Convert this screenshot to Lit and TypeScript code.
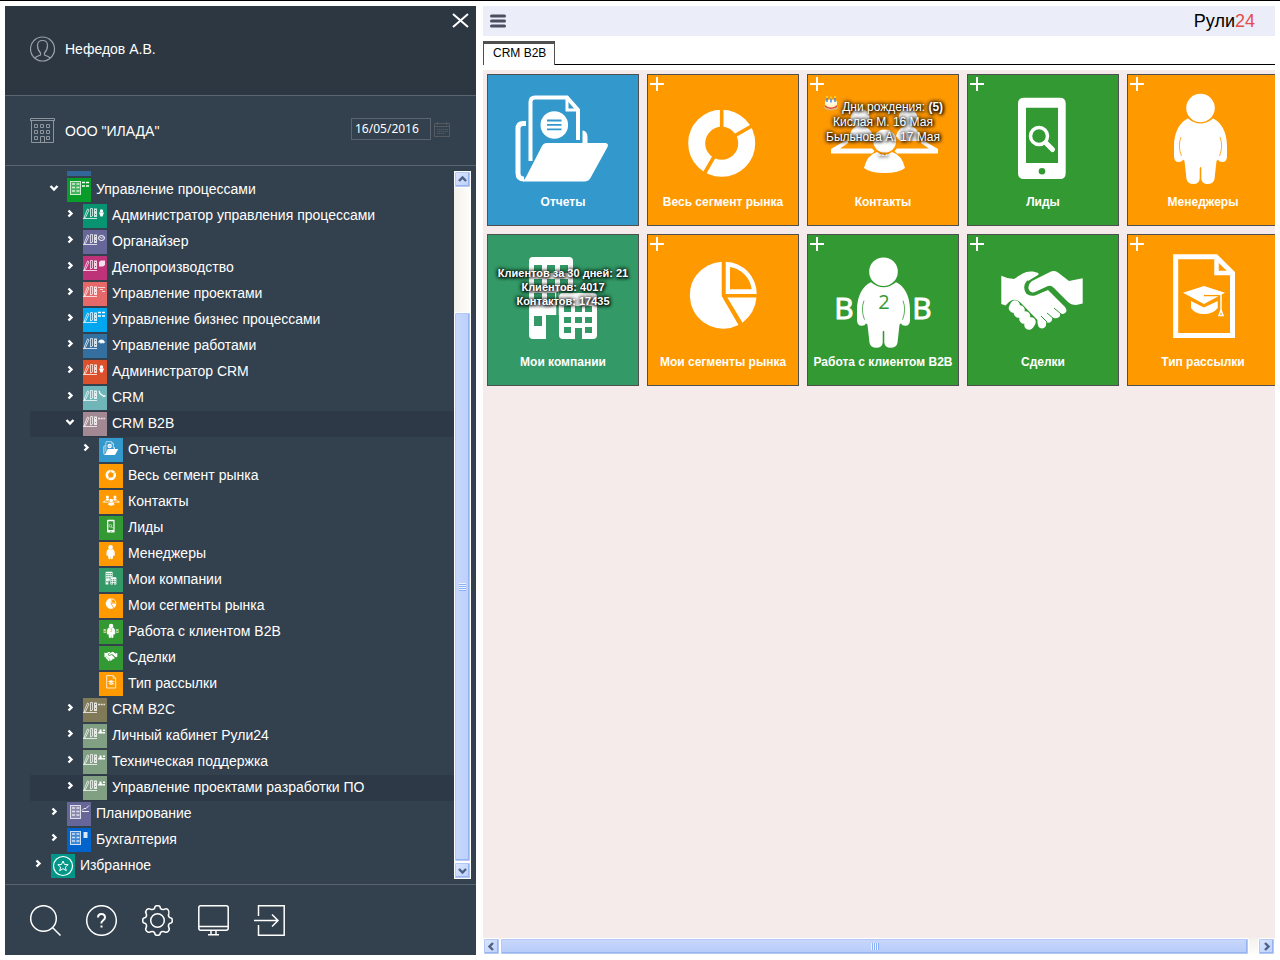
import { LitElement, html, css, svg, nothing, SVGTemplateResult } from "lit";
import { customElement, property } from "lit/decorators.js";
import { classMap } from "lit/directives/class-map.js";
import { styleMap } from "lit/directives/style-map.js";

type Art = SVGTemplateResult;

const personBody = svg`
  <circle cx="73.5" cy="34" r="14.3"/>
  <path d="M61 44.5Q67 49.5 73.5 49.5T86 44.5C94 48 100 58 100 72V83Q99.500 88 95.500 88Q92 88 91 85.500L89.500 87L87.500 105Q86.500 110 80.500 110Q75 110 74.300 105V94Q73.500 92 72.700 94V105Q72 110 66.500 110Q60.500 110 59.500 105L57.500 87L56 85.500Q55 88 51.500 88Q47.500 88 47 83V72C47 58 53 48 61 44.500Z"/>
  <path d="M54 63Q50.500 72 54.500 82M93 63Q96.500 72 92.500 82" fill="none" stroke="currentColor" stroke-width=".8"/>`;

// Pictures of the sections, drawn on the 152-unit square of a tile; currentColor is the tile's own colour.
const art: Record<string, Art> = {
  reports: svg`
    <path d="M43.500 87V28Q43.500 23.500 48 23.500H80L91 36V66" fill="none" stroke="#fff" stroke-width="4"/>
    <path d="M80 25V36H91" fill="none" stroke="#fff" stroke-width="3"/>
    <circle cx="67.300" cy="51" r="13.800"/>
    <path d="M60 46.500H74.500M60 50.900H74.500M60 55.300H74.500" stroke="currentColor" stroke-width="1.800"/>
    <path d="M39 49.500H36Q31 49.500 31 55V99Q31 105 37 105" fill="none" stroke="#fff" stroke-width="5"/>
    <path d="M95.500 56.500Q100.500 57 100.500 63V70H95.500Z"/>
    <path d="M39 103L55 72Q56.500 69 60 69H118.500Q122 69.500 120.500 73L104 103Q102 107.500 97 107.500H36Z"/>`,
  segment: svg`
    <circle cx="74.700" cy="69.300" r="25" fill="none" stroke="#fff" stroke-width="17"/>
    <path d="M74.700 69.300V33M74.700 69.300L106 51.200M74.700 69.300L56.500 101" stroke="currentColor" stroke-width="3.600"/>`,
  contacts: svg`
    <circle cx="53" cy="44" r="9.500"/><circle cx="101" cy="44" r="9.500"/>
    <path d="M42 66Q43 52 53 52Q63 52 66 62L62 67H42ZM113 66Q112 52 101 52Q92 52 89 62L93 67H113Z"/>
    <path d="M24 79.500V75L41 65V69L33 74.500H65L67.500 77L65 79.500ZM131 79.500V75L114 65V69L122 74.500H90L87.500 77L90 79.500Z"/>
    <path d="M57 94Q60 81 70 78Q77.500 84 85 78Q95 81 98 94Q92 99 77.500 99Q63 99 57 94Z"/>
    <circle cx="77.700" cy="67" r="11.500"/>`,
  leads: svg`
    <path fill-rule="evenodd" d="M57 23.700H93Q98.700 23.700 98.700 29.500V99Q98.700 105 93 105H57Q51 105 51 99V29.500Q51 23.700 57 23.700ZM59 33.700V89H91V33.700Z"/>
    <circle cx="75" cy="97.300" r="3.300" fill="currentColor"/>
    <circle cx="72" cy="62" r="8.500" fill="none" stroke="#fff" stroke-width="3.500"/>
    <path d="M79 69L85.500 75.500" stroke="#fff" stroke-width="5" stroke-linecap="round"/>`,
  managers: personBody,
  companies: svg`
    <path d="M46 23H82Q86 23 86 27V57H72V81H59V105H46Q42 105 42 101V27Q42 23 46 23Z"/>
    <path d="M76 59H106Q110 59 110 63V101Q110 105 106 105H95V94H88V105H76Q72 105 72 101V63Q72 59 76 59Z"/>
    <path fill="currentColor" d="M47 31h8v8h-8zM60 31h8v8h-8zM73 31h8v8h-8zM47 45h8v8h-8zM60 45h8v8h-8zM73 45h8v8h-8zM47 59h8v8h-8zM60 59h8v8h-8zM47 82h8v10h-8zM77 72h7v6h-7zM88 72h7v6h-7zM98 72h7v6h-7zM77 83h7v6h-7zM88 83h7v6h-7zM98 83h7v6h-7zM77 93h7v6h-7zM98 93h7v6h-7z"/>
    <path d="M70.500 58V81" stroke="currentColor" stroke-width="2.500"/>`,
  segments: svg`
    <path d="M74.700 27.700A33.500 33.500 0 1 0 91.500 91L74.700 62Z"/>
    <path fill-rule="evenodd" d="M78.700 27.700A32 32 0 0 1 109.700 60H78.700ZM83 33V55.300H104.700A26 26 0 0 0 83 33Z"/>
    <path d="M80.300 63.500H109.500Q108 79 95.500 88.700Z"/>`,
  b2b: svg`
    <g transform="translate(3 3.700)">${personBody}</g>
    <text x="37" y="85" class="letter">B</text><text x="115" y="85" class="letter">B</text>
    <text x="77" y="75" class="digit">2</text>`,
  deals: svg`
    <path d="M34.300 41.700Q41 45 47 45C54 41 58 36 68 38Q73 39 71 41L61 47Q56 53 60 59Q64 62 69 60.500L81 56L98 73Q101 77 98 79Q96 81 93 79Q94 83 90 84Q87 85 85 83Q86 87 83 88.500Q81 89 79 88Q80 94 75 94.500Q70 94 70.500 86L54 69Q48 63 42 68L38.500 71.500L34.300 70Z"/>
    <path d="M115.700 44.300L102 47L91 38.500Q87 36 83 38L65 47Q60 51 62 56Q64 60 69 57.500L81 52Q84 51 87 54L101 68Q104 71 109 71L115.700 69.500Z"/>
    <path d="M61 47Q56 53 60 59Q64 62 69 60L81 54.500Q83.500 54 86 56.500L99 69.500" fill="none" stroke="currentColor" stroke-width="2"/>
    <path d="M48 71L46.500 74M53 76L51.500 79M58.500 82L57 85M64 88L62 91" stroke="#fff" stroke-width="9.500" stroke-linecap="round"/>
    <path d="M87 74L94 80M80 79L87 85M74 82L80 88" stroke="currentColor" stroke-width="1"/>`,
  mailing: svg`
    <path d="M48.700 22.700H89L105.500 39V101.500H48.700Z" fill="none" stroke="#fff" stroke-width="5"/>
    <path d="M89.500 23V39H105" fill="none" stroke="#fff" stroke-width="4.500"/>
    <path d="M56 58.700L77 52L98 58.700L77 70ZM64 67L77 73.500L90.700 67V74Q86 80 77 80Q68 80 64 74Z"/>
    <path d="M77 61.500H92V80" fill="none" stroke="currentColor" stroke-width="1.500"/>
    <path d="M78 60H94V76L96 81.500H92L94 76" fill="none" stroke="#fff" stroke-width="1.500"/>`,
};

// Small mark in the corner of a module picture, on a 24-unit square.
const marks: Record<string, Art> = {
  flow: svg`<path d="M15 4.500h7M15 8h7" stroke="#fff" stroke-width="1.600" stroke-dasharray="3 1"/>`,
  person: svg`<circle cx="18.500" cy="7" r="1.700"/><path d="M16 8.500h5l-1.500 4h-2z"/>`,
  clock: svg`<ellipse cx="18.500" cy="8" rx="3" ry="2.500" fill="none" stroke="#fff"/><path d="M17 7l2 1.500 1.500-1.500" fill="none" stroke="#fff" stroke-width=".8"/>`,
  box: svg`<path d="M16 6l2-1.500h4V9l-2 1.500h-4z" opacity=".85"/>`,
  gantt: svg`<path d="M15 5.500h7M17 7.500h3M19 9.500h3" stroke="#fff" opacity=".7"/>`,
  people: svg`<path d="M15 8.500q1-3 3.500-3t3.500 3l-2 1-1-1-1 1.500-1-1.500z"/>`,
  phone: svg`<path d="M16 5l1 2.500 4 3 1.500-1" fill="none" stroke="#fff" stroke-width="1.200"/>`,
  dots: svg`<path d="M15 6.500h7" stroke="#fff" stroke-width="1.500" stroke-dasharray="2 .7" opacity=".8"/>`,
  card: svg`<path d="M15 9.500q0-2 1.500-2v-2h2v2q1.500 0 1.500 2zM20 5.500h2v1.500h-2zM20 8h2v1.500h-2z"/>`,
  chart: svg`<path d="M15 8.500l2-2h2l3-3M15 9.500h7" fill="none" stroke="#fff" stroke-width=".9"/>`,
  coins: svg`<path d="M16.500 4h4v6h-4z" opacity=".85"/>`,
};

const moduleArt = (mark: string) => svg`
  <g opacity=".8"><path d="M1 13.500L4.500 5l1.500 1-3.500 7.500z" fill="none" stroke="#fff" stroke-width=".9"/>
  <path d="M7.500 4.500h2v7.500l-2 1z" fill="none" stroke="#fff" stroke-width=".9"/>
  <path d="M11 4.500h3v8.500h-3z"/><path d="M12 6.500h1M12 10.500h1" stroke="currentColor"/></g>
  <path d="M0 14.500h14" stroke="#fff" opacity=".75"/>${marks[mark]}`;

const calcArt = (mark: string) => svg`
  <rect x="3.500" y="3.500" width="10" height="13" fill="#fff" fill-opacity=".3" stroke="#fff" opacity=".8"/>
  <path d="M5 6h3M9.500 6h3M5 9.500h3M9.500 9.500h3M5 13h3M9.500 13h3" stroke="#fff" stroke-width="1.500" opacity=".75"/>${marks[mark]}`;

const starArt = svg`<circle cx="12" cy="12" r="9.500" fill="none" stroke="#fff" stroke-width="1.200"/>
  <path d="M12 7l1.500 3.500 3.700.2-2.900 2.400 1 3.600L12 14.700l-3.300 2 1-3.600-2.900-2.400 3.700-.2z" fill="none" stroke="#fff"/>`;

interface TreeItem {
  level: number;
  label?: string;
  color: string;
  open?: boolean;
  leaf?: boolean;
  marked?: boolean;
  section?: string;
  glyph?: Art;
}

interface Section {
  id: string;
  label: string;
  color: string;
  add: boolean;
}

const BLUE = "#3398cc";
const ORANGE = "#ff9900";
const GREEN = "#339933";
const TEAL = "#339966";

const sections: Section[] = [
  { id: "reports", label: "Отчеты", color: BLUE, add: false },
  { id: "segment", label: "Весь сегмент рынка", color: ORANGE, add: true },
  { id: "contacts", label: "Контакты", color: ORANGE, add: true },
  { id: "leads", label: "Лиды", color: GREEN, add: true },
  { id: "managers", label: "Менеджеры", color: ORANGE, add: true },
  { id: "companies", label: "Мои компании", color: TEAL, add: false },
  { id: "segments", label: "Мои сегменты рынка", color: ORANGE, add: true },
  { id: "b2b", label: "Работа с клиентом B2B", color: GREEN, add: true },
  { id: "deals", label: "Сделки", color: GREEN, add: true },
  { id: "mailing", label: "Тип рассылки", color: ORANGE, add: true },
];

const tree: TreeItem[] = [
  { level: 1, color: "#336699", leaf: true },
  { level: 1, label: "Управление процессами", color: "#089c28", open: true, glyph: calcArt("flow") },
  { level: 2, label: "Администратор управления процессами", color: "#089470", glyph: moduleArt("person") },
  { level: 2, label: "Органайзер", color: "#666699", glyph: moduleArt("clock") },
  { level: 2, label: "Делопроизводство", color: "#bd3279", glyph: moduleArt("box") },
  { level: 2, label: "Управление проектами", color: "#e66868", glyph: moduleArt("gantt") },
  { level: 2, label: "Управление бизнес процессами", color: "#00a6f0", glyph: moduleArt("flow") },
  { level: 2, label: "Управление работами", color: "#336f9f", glyph: moduleArt("people") },
  { level: 2, label: "Администратор CRM", color: "#dc512c", glyph: moduleArt("person") },
  { level: 2, label: "CRM", color: "#70b6b9", glyph: moduleArt("phone") },
  { level: 2, label: "CRM B2B", color: "#a18893", open: true, marked: true, glyph: moduleArt("dots") },
  ...sections.map((s) => ({ level: 3, label: s.label, color: s.color, leaf: s.id !== "reports", section: s.id })),
  { level: 2, label: "CRM B2C", color: "#807a58", glyph: moduleArt("dots") },
  { level: 2, label: "Личный кабинет Рули24", color: "#809f83", glyph: moduleArt("card") },
  { level: 2, label: "Техническая поддержка", color: "#809f83", glyph: moduleArt("card") },
  { level: 2, label: "Управление проектами разработки ПО", color: "#809f83", marked: true, glyph: moduleArt("card") },
  { level: 1, label: "Планирование", color: "#666699", glyph: calcArt("chart") },
  { level: 1, label: "Бухгалтерия", color: "#0064cc", glyph: calcArt("coins") },
  { level: 0, label: "Избранное", color: "#009688", glyph: starArt },
];

const reset = css`
  *, *::before, *::after { box-sizing: border-box; }
  button { margin: 0; padding: 0; border: 0; background: none; color: inherit; font: inherit; display: flex; align-items: center; justify-content: center; }
  a { color: inherit; text-decoration: none; }
  svg { display: block; }
`;

@customElement("scroll-strip")
class ScrollStrip extends LitElement {
  @property({ type: Boolean, reflect: true }) horizontal = false;
  @property({ type: Number }) before = 0;
  @property({ type: Number }) after = 0;

  static styles = [reset, css`
    :host { display: flex; flex-direction: column; flex: none; width: 17px; background: linear-gradient(90deg, #f3f1ec, #fefefb); }
    :host([horizontal]) { flex-direction: row; width: auto; height: 17px; background: linear-gradient(#f3f1ec, #fefefb); }
    .end, .thumb { border: 1px solid #fff; border-radius: 2px; box-shadow: inset 0 0 0 1px #b4c8f6, inset -1px -1px 0 1px #98b4ee; }
    .end { flex: none; width: 17px; height: 17px; background: linear-gradient(135deg, #dce7fe, #b9cefa); }
    .track { flex: 1; display: flex; flex-direction: inherit; }
    .thumb { display: flex; align-items: center; justify-content: center; background: linear-gradient(90deg, #c9d7fc, #bad0fb); }
    :host([horizontal]) .thumb { background: linear-gradient(#c9d7fc, #b5cbfa); }
    .grip { width: 7px; height: 8px; background: repeating-linear-gradient(#eef4fe 0 1px, #8cb0f8 1px 2px); }
    :host([horizontal]) .grip { width: 8px; height: 7px; background: repeating-linear-gradient(90deg, #eef4fe 0 1px, #8cb0f8 1px 2px); }
  `];

  render() {
    const arrow = (d: string) => html`<svg width="11" height="11" viewBox="0 0 11 11"><path d=${d} fill="none" stroke="#4d6185" stroke-width="2.400"/></svg>`;
    return html`
      <button class="end" aria-label="Назад">${arrow(this.horizontal ? "M7 2L3.500 5.500L7 9" : "M2 7L5.500 3.500L9 7")}</button>
      <div class="track">
        <div style=${styleMap({ flexGrow: String(this.before) })}></div>
        <div class="thumb" style=${styleMap({ flexGrow: String(100 - this.before - this.after) })}><div class="grip"></div></div>
        <div style=${styleMap({ flexGrow: String(this.after) })}></div>
      </div>
      <button class="end" aria-label="Вперед">${arrow(this.horizontal ? "M4 2L7.500 5.500L4 9" : "M2 4L5.500 7.500L9 4")}</button>`;
  }
}

@customElement("nav-tree")
class NavTree extends LitElement {
  static styles = [reset, css`
    :host { display: flex; flex-direction: column; justify-content: flex-end; flex: 1; min-width: 0; overflow: hidden; }
    .list { list-style: none; margin: 0; padding: 0; }
    .row { display: flex; align-items: center; height: 26px; white-space: nowrap; }
    .marked { background: #2d3946; }
    .indent { flex: none; }
    .toggle { flex: none; width: 16px; height: 16px; margin: 0 5px 4px 0; }
    .link { display: flex; align-items: center; gap: 5px; line-height: 24px; }
    .icon { width: 24px; height: 24px; }
    .text { padding-bottom: 2px; }
    .letter, .digit { font: 30px "Open Sans", sans-serif; text-anchor: middle; }
    .digit { font-size: 20px; fill: currentColor; }
  `];

  render() {
    return html`<ul class="list">${tree.map((item) => html`
      <li class=${classMap({ row: true, marked: !!item.marked })}>
        <span class="indent" style=${styleMap({ width: `${item.level * 16}px` })}></span>
        <button class="toggle" aria-label="Развернуть">${item.leaf ? nothing : html`
          <svg width="12" height="12" viewBox="0 0 12 12"><path d=${item.open ? "M2.500 4L6 7.500L9.500 4" : "M4.500 2.500L7.500 5.500L4.500 8.500"} fill="none" stroke="#fff" stroke-width="2.400"/></svg>`}</button>
        <a class="link" href="#">
          <svg class="icon" viewBox=${item.section ? "0 0 152 152" : "0 0 24 24"} fill="#fff" style=${styleMap({ background: item.color, color: item.color })}>
            ${item.section ? art[item.section] : item.glyph ?? nothing}
          </svg>
          <span class="text">${item.label ?? nothing}</span>
        </a>
      </li>`)}</ul>`;
  }
}

@customElement("section-tile")
class SectionTile extends LitElement {
  @property({ attribute: false }) section!: Section;

  static styles = [reset, css`
    :host { display: block; }
    .tile { position: relative; display: flex; flex-direction: column; width: 152px; height: 152px; border: 1px solid #505050; color: #fff; text-align: center; }
    .art { position: absolute; inset: 0; width: 100%; height: 100%; }
    .plus { position: absolute; left: 2px; top: 2px; width: 14px; height: 14px; }
    .label { position: relative; margin-top: auto; padding-bottom: 15px; font-weight: bold; font-size: 12px; line-height: 16px; white-space: nowrap; }
    .note { position: absolute; left: 0; right: 0; top: 20px; font-size: 12px; line-height: 15px; white-space: nowrap; text-shadow: 0 0 4px #000, 0 0 4px #000, 1px 1px 3px #000; }
    .stats { top: 31px; font-size: 11px; line-height: 14px; font-weight: bold; }
    .cake { display: inline-block; width: 16px; height: 16px; }
    .letter, .digit { font: 30px "Open Sans", sans-serif; text-anchor: middle; }
    .letter { stroke: #fff; stroke-width: 1px; }
    .digit { font-size: 20px; fill: currentColor; }
  `];

  note() {
    if (this.section.id === "contacts") {
      return html`<div class="note">
        <svg class="cake" viewBox="0 0 16 16"><ellipse cx="8" cy="12.500" rx="7" ry="3" fill="#d9b679"/><path d="M2 7v4.500q2 2.500 6 2.500t6-2.500V7z" fill="#fff4c8"/><path d="M2 10q6 5 12 0v2q-6 4-12 0z" fill="#e05038"/><ellipse cx="8" cy="7" rx="6" ry="2.500" fill="#fffbe8"/><path d="M4 3v4M8 3.500v4M12 3v4" stroke="#4a90e0" stroke-width="1.500"/><path d="M4 1v2M8 1.500v2M12 1v2" stroke="#ffd830" stroke-width="1.500"/></svg>
        Дни рождения: <b>(5)</b><br>Кислая М. 16 Мая<br>Быльнова А. 17 Мая<br>...</div>`;
    }
    if (this.section.id === "companies") {
      return html`<div class="note stats">Клиентов за 30 дней: 21<br>Клиентов: 4017<br>Контактов: 17435</div>`;
    }
    return nothing;
  }

  render() {
    const { id, label, color, add } = this.section;
    return html`<a class="tile" href="#" style=${styleMap({ background: color })}>
      <svg class="art" viewBox="1 1 150 150" fill="#fff" style=${styleMap({ color })}>${art[id]}</svg>
      ${add ? html`<svg class="plus" viewBox="0 0 14 14"><path d="M7 0V14M0 7H14" stroke="#fff" stroke-width="2"/></svg>` : nothing}
      ${this.note()}
      <span class="label">${label}</span>
    </a>`;
  }
}

@customElement("app-root")
class AppRoot extends LitElement {
  static styles = [reset, css`
    :host { display: flex; gap: 7px; height: 100vh; box-sizing: border-box; padding: 5px; border-top: 1px solid #000; background: #fff; font-family: "Liberation Sans", Arial, sans-serif; overflow: hidden; }
    .side { flex: none; width: 471px; display: flex; flex-direction: column; background: #33404d; color: #fff; font-size: 14px; }
    .user { position: relative; display: flex; align-items: center; gap: 9px; height: 90px; padding: 0 25px 4px; background: #2d3742; border-bottom: 1px solid #596470; }
    .close { position: absolute; right: 6px; top: 5px; width: 19px; height: 19px; }
    .firm { display: flex; align-items: center; gap: 9px; height: 70px; padding: 0 25px; border-bottom: 1px solid #596470; }
    .date { display: flex; align-items: center; gap: 3px; margin-left: auto; }
    .field { width: 80px; height: 22px; padding: 0 3px; margin-bottom: 4px; border: 1px solid #596470; border-radius: 0; background: transparent; color: #fff; font: 12px "Noto Sans", sans-serif; outline: 0; }
    .nav { flex: 1; min-height: 0; display: flex; padding: 5px 5px 5px 25px; }
    .tools { display: flex; gap: 25px; height: 71px; padding: 20px 25px; border-top: 1px solid #596470; }
    .main { flex: 1; min-width: 0; display: flex; flex-direction: column; }
    .bar { display: flex; align-items: center; justify-content: space-between; height: 30px; padding: 0 20px 1px 7px; background: #ebeef8; }
    .logo { font-size: 18px; line-height: 22px; color: #000; }
    .red { color: #e94b4b; }
    .tabs { display: flex; margin: 5px 0; height: 24px; }
    .tab { padding: 0 8px 0 9px; border: 1px solid #505050; border-top-width: 3px; border-bottom: 0; font-size: 12px; line-height: 18px; color: #000; align-items: flex-start; }
    .rest { flex: 1; border-bottom: 1px solid #000; }
    .board { flex: 1; min-height: 0; overflow: hidden; padding: 4px; background: #f5ebeb; display: grid; grid-template-columns: repeat(5, 152px); align-content: start; gap: 8px; }
  `];

  render() {
    return html`
      <nav class="side">
        <div class="user">
          <svg width="26" height="26" viewBox="0 0 26 26" fill="none" stroke="#9aa1a9" stroke-width="1.200"><circle cx="12.500" cy="13" r="12"/><path d="M12.500 4.500q5 0 5 5q0 4.500-3 7.500v2q4 1.500 6 3M12.500 4.500q-5 0-5 5q0 4.500 3 7.500v2q-4 1.500-6 3"/></svg>
          <span>Нефедов А.В.</span>
          <button class="close" aria-label="Закрыть"><svg width="17" height="15" viewBox="0 0 17 15"><path d="M1 1L16 14M16 1L1 14" stroke="#fff" stroke-width="2"/></svg></button>
        </div>
        <div class="firm">
          <svg width="26" height="26" viewBox="0 0 26 26" fill="none" stroke="#8d969f"><path d="M.5 2.500V.5H24.500V2.500M0 2.500H25M1.500 2.500V24.500H23.500V2.500M10.500 24.500V18.500H14.500V24.500"/><path d="M4.500 6.500h3v3h-3zM10.500 6.500h3v3h-3zM16.500 6.500h3v3h-3zM4.500 12.500h3v3h-3zM10.500 12.500h3v3h-3zM16.500 12.500h3v3h-3zM4.500 18.500h3v3h-3zM16.500 18.500h3v3h-3z"/></svg>
          <span>ООО "ИЛАДА"</span>
          <div class="date">
            <input class="field" type="text" aria-label="Дата" value="16/05/2016">
            <svg width="17" height="17" viewBox="0 0 17 17" fill="none" stroke="#555a60"><path d="M.5 1.500h15v13h-15zM.5 4.500h15M3.500 0v3M12.500 0v3"/><path d="M3 7.500h11M3 9.500h11M3 11.500h8" stroke-dasharray="1.500 .5"/></svg>
          </div>
        </div>
        <div class="nav"><nav-tree></nav-tree><scroll-strip .before=${18.7} .after=${0}></scroll-strip></div>
        <div class="tools">
          ${this.tool("Поиск", svg`<circle cx="13.500" cy="13.500" r="12.800"/><path d="M22.500 22.500L30.500 30.500"/>`)}
          ${this.tool("Справка", svg`<circle cx="15.500" cy="15.500" r="14.800"/><path d="M12 12.500q0-3.500 3.500-3.500t3.500 3.500q0 1.500-2 3t-1.500 3M15.500 20.500v2" stroke-width="2"/>`)}
          ${this.tool("Настройки", svg`<circle cx="15.500" cy="15.500" r="6.800"/><path d="M12.500 3.500Q13 .8 14.500 .8H16.500Q18 .8 18.500 3.500Q20 5.200 22.500 4.200Q24.500 3 26 4.700T26.800 8.500Q25.800 11 27.500 12.500Q30.200 13 30.200 14.500V16.500Q30.200 18 27.500 18.500Q25.800 20 26.800 22.500Q28 24.500 26.300 26.200T22.500 26.800Q20 25.800 18.500 27.500Q18 30.200 16.500 30.200H14.500Q13 30.200 12.500 27.500Q11 25.800 8.500 26.800Q6.500 28 4.700 26.300T4.200 22.500Q5.200 20 3.500 18.500Q.8 18 .8 16.500V14.500Q.8 13 3.500 12.500Q5.200 11 4.200 8.500Q3 6.500 4.700 4.700T8.500 4.200Q11 5.200 12.500 3.500Z"/>`)}
          ${this.tool("Рабочий стол", svg`<rect x=".8" y=".8" width="29.400" height="24.400" rx="2"/><path d="M1 21.500H30M13 25.500V29.500M18 25.500V29.500M10 29.800H21"/>`)}
          ${this.tool("Выход", svg`<path d="M4.500 11V.8H30.200V30.200H4.500V20M0 15.500H24M18 9.500L24 15.500L18 21.500"/>`)}
        </div>
      </nav>
      <main class="main">
        <header class="bar">
          <button aria-label="Меню"><svg width="16" height="14" viewBox="0 0 16 14"><path d="M1.500 2H14.500M1.500 7H14.500M1.500 12H14.500" stroke="#4d4d60" stroke-width="3" stroke-linecap="round"/></svg></button>
          <a class="logo" href="#">Рули<span class="red">24</span></a>
        </header>
        <div class="tabs"><button class="tab">CRM B2B</button><div class="rest"></div></div>
        <section class="board">${sections.map((s) => html`<section-tile .section=${s}></section-tile>`)}</section>
        <scroll-strip horizontal .before=${0} .after=${1.2}></scroll-strip>
      </main>`;
  }

  tool(name: string, picture: Art) {
    return html`<button aria-label=${name}><svg width="31" height="31" viewBox="0 0 31 31" fill="none" stroke="#fff" stroke-width="1.500">${picture}</svg></button>`;
  }
}
